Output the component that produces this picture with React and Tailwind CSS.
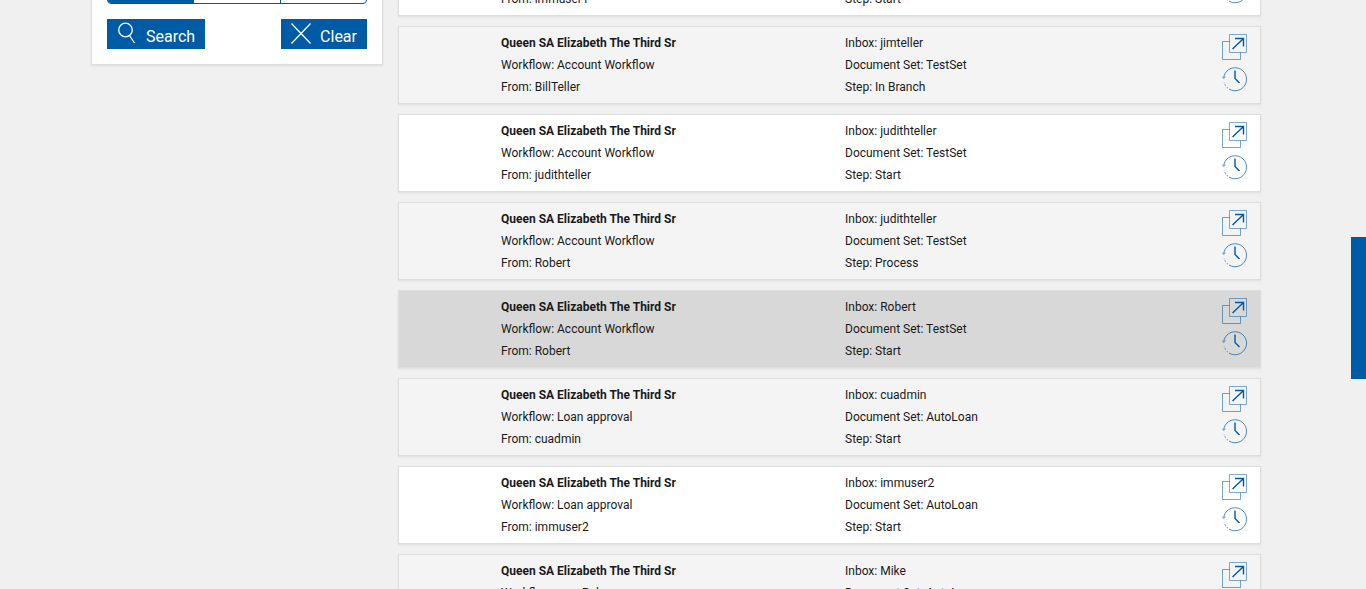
import React from 'react';

const items = [
    { name: 'Queen SA Elizabeth The Third Sr', workflow: 'Loan approval', from: 'immuser1', inbox: 'immuser1', set: 'AutoLoan', step: 'Start', bg: 'bg-white' },
    { name: 'Queen SA Elizabeth The Third Sr', workflow: 'Account Workflow', from: 'BillTeller', inbox: 'jimteller', set: 'TestSet', step: 'In Branch', bg: 'bg-[#f4f4f4]' },
    { name: 'Queen SA Elizabeth The Third Sr', workflow: 'Account Workflow', from: 'judithteller', inbox: 'judithteller', set: 'TestSet', step: 'Start', bg: 'bg-white' },
    { name: 'Queen SA Elizabeth The Third Sr', workflow: 'Account Workflow', from: 'Robert', inbox: 'judithteller', set: 'TestSet', step: 'Process', bg: 'bg-[#f4f4f4]' },
    { name: 'Queen SA Elizabeth The Third Sr', workflow: 'Account Workflow', from: 'Robert', inbox: 'Robert', set: 'TestSet', step: 'Start', bg: 'bg-[#d8d8d8]' },
    { name: 'Queen SA Elizabeth The Third Sr', workflow: 'Loan approval', from: 'cuadmin', inbox: 'cuadmin', set: 'AutoLoan', step: 'Start', bg: 'bg-[#f4f4f4]' },
    { name: 'Queen SA Elizabeth The Third Sr', workflow: 'Loan approval', from: 'immuser2', inbox: 'immuser2', set: 'AutoLoan', step: 'Start', bg: 'bg-white' },
    { name: 'Queen SA Elizabeth The Third Sr', workflow: 'new Rule', from: 'Mike', inbox: 'Mike', set: 'AutoLoan', step: 'Start', bg: 'bg-[#f4f4f4]' },
];

function OpenIcon() {
    return (
        <svg width="26" height="26" viewBox="0 0 26 26" fill="none" stroke="#005ba6">
            <path d="M7.5 7.5H0.5V25.5H18.5V18.5" strokeOpacity="0.55" />
            <path d="M7.5 0.5H24.5V18.5H7.5Z" strokeOpacity="0.5" />
            <path d="M10.500 15L21.500 4.500M13 4.500H21.500V12.500" strokeWidth="1.4" />
        </svg>
    );
}

function HistoryIcon() {
    return (
        <svg width="26" height="26" viewBox="0 0 26 26" fill="none" stroke="#005ba6">
            <path d="M1.700 11.500A11.500 11.500 0 1 1 7 23" strokeOpacity="0.7" />
            <path d="M6 22.300A11.500 11.500 0 0 1 2 16" strokeOpacity="0.55" strokeDasharray="2 1.500" />
            <path d="M0 10.500L1.700 12.500L3.500 10.500" strokeOpacity="0.6" />
            <path d="M13 4.500V12.500L17.500 17" strokeWidth="1.4" />
        </svg>
    );
}

function WorkItem({ item }) {
    return (
        <li className={`flex border border-[#dedede] shadow-[0_1px_2px_rgba(0,0,0,0.08)] py-[5px] pl-[102px] pr-3 ${item.bg}`}>
            <div className="w-[344px]">
                <p className="font-bold">{item.name}</p>
                <p>Workflow: {item.workflow}</p>
                <p>From: {item.from}</p>
            </div>
            <div className="flex-1">
                <p>Inbox: {item.inbox}</p>
                <p>Document Set: {item.set}</p>
                <p>Step: {item.step}</p>
            </div>
            <div className="flex flex-col gap-[6px] pt-[2px]">
                <button type="button" aria-label="Open"><OpenIcon /></button>
                <button type="button" aria-label="History"><HistoryIcon /></button>
            </div>
        </li>
    );
}

export default function App() {
    return (
        <div className="h-screen overflow-hidden bg-[#f0f0f0] pr-[14px] font-['Roboto',sans-serif] text-[12px] leading-[22px] text-[#1a1a1a]">
            <div className="mx-auto flex max-w-[1170px] items-start gap-[15px]">
                {/* Search panel */}
                <aside className="-mt-[33px] w-[292px] shrink-0 border border-[#dedede] bg-white px-[15px] pb-[15px] shadow-[0_1px_2px_rgba(0,0,0,0.08)]">
                    <div className="flex h-9 divide-x divide-[#005ba6] overflow-hidden rounded-[4px] border border-[#005ba6]">
                        <button type="button" aria-label="All" className="flex-1 bg-[#005ba6]"></button>
                        <button type="button" aria-label="Mine" className="flex-1"></button>
                        <button type="button" aria-label="Others" className="flex-1"></button>
                    </div>
                    <div className="mt-[15px] flex justify-between text-[16px] text-white">
                        <button type="button" className="flex h-[30px] items-start gap-[9px] bg-[#005ba6] px-[10px]">
                            <svg className="mt-[3px]" width="20" height="22" viewBox="0 0 20 22" fill="none" stroke="white" strokeWidth="1.3">
                                <circle cx="8.500" cy="8" r="6.800" />
                                <path d="M12.500 13.500L17.500 21" />
                            </svg>
                            <span className="pt-[7px]">Search</span>
                        </button>
                        <button type="button" className="flex h-[30px] items-start gap-[9px] bg-[#005ba6] px-[10px]">
                            <svg className="mt-[4px]" width="20" height="21" viewBox="0 0 20 21" fill="none" stroke="white" strokeWidth="1.3">
                                <path d="M0.500 0.500L19.500 20.500M19.500 0.500L0.500 20.500" />
                            </svg>
                            <span className="pt-[7px]">Clear</span>
                        </button>
                    </div>
                </aside>

                {/* Work items */}
                <ul className="-mt-[62px] flex flex-1 flex-col gap-[10px]">
                    {items.map((item, index) => (
                        <WorkItem key={index} item={item} />
                    ))}
                </ul>
            </div>

            {/* Side drawer handle */}
            <button type="button" aria-label="Open side panel" className="fixed right-0 top-[237px] h-[142px] w-[15px] bg-[#005ba6]"></button>
        </div>
    );
}
